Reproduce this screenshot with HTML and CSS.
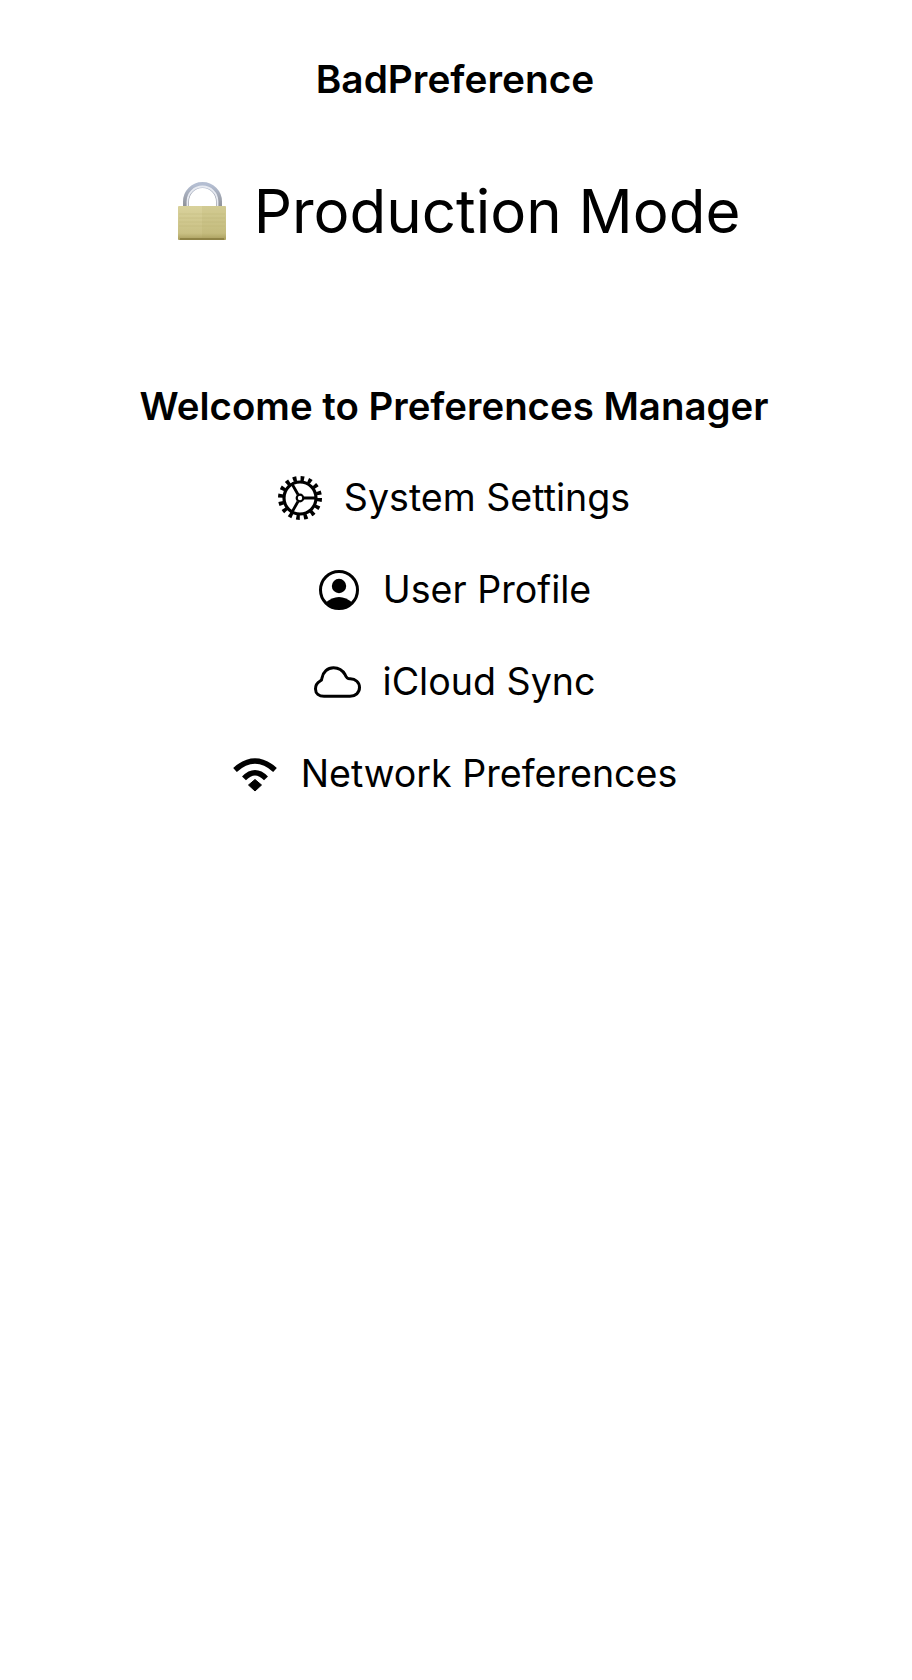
FILE: index.html
```html
<!DOCTYPE html>
<html>

<head>
  <meta charset="utf-8">
  <meta name="viewport" content="width=device-width">
  <title>BadPreference</title>
  <link rel="stylesheet" href="styles.css">
</head>

<body>
  <div class="navTitle">BadPreference</div>

  <div class="mode">
    <svg class="lockIcon" viewBox="0 0 48 58">
      <defs>
        <linearGradient id="brass" x1="0" y1="0" x2="0" y2="1">
          <stop offset="0" stop-color="#d9d29c"/>
          <stop offset="0.8" stop-color="#c9c084"/>
          <stop offset="1" stop-color="#a89c5c"/>
        </linearGradient>
        <linearGradient id="steel" x1="0" y1="0" x2="0" y2="1">
          <stop offset="0" stop-color="#b4bed2"/>
          <stop offset="1" stop-color="#8d8f94"/>
        </linearGradient>
      </defs>
      <path d="M8 26V19.500a16.500 16.500 0 0 1 33 0V26" fill="none" stroke="url(#steel)" stroke-width="6"/>
      <path d="M9.500 26V19.500a15 15 0 0 1 30 0V26" fill="none" stroke="#e8ebf2" stroke-width="1.800"/>
      <rect x="0" y="24" width="48" height="34" rx="1" fill="url(#brass)"/>
      <rect x="24" y="24" width="24" height="34" fill="#a89a50" opacity="0.12"/>
      <path d="M1 32H47M1 36H47M1 40H47M1 44H47" stroke="#b5ac6c" stroke-width="0.800" opacity="0.35"/>
      <rect x="2" y="56" width="44" height="2" fill="#8f8346"/>
    </svg>
    <span>Production Mode</span>
  </div>

  <div class="content">
    <h1>Welcome to Preferences Manager</h1>

    <div class="prefRow">
      <svg class="prefIcon" viewBox="0 0 44 44" fill="none" stroke="#000">
        <circle cx="22" cy="22" r="16" stroke-width="3.200"/>
        <circle cx="22" cy="22" r="3.300" stroke-width="2.200"/>
        <path d="M26 22H38M20 18.500 13.500 7M20 25.500 13.500 37" stroke-width="2.800"/>
        <circle cx="22" cy="22" r="19.500" stroke-width="5" stroke-dasharray="3.600 4.058"/>
      </svg>
      <span>System Settings</span>
    </div>

    <div class="prefRow">
      <svg class="prefIcon" viewBox="0 0 44 44">
        <circle cx="22" cy="22" r="18.500" fill="none" stroke="#000" stroke-width="3"/>
        <circle cx="22" cy="18" r="7.200"/>
        <path d="M8 35Q22 23 36 35A20 20 0 0 1 8 35z"/>
      </svg>
      <span>User Profile</span>
    </div>

    <div class="prefRow">
      <svg class="prefIcon" viewBox="0 0 48 44" fill="none" stroke="#000" stroke-width="3">
        <path d="M11 36.300H37c5.500 0 9.500-3.700 9.500-8.800 0-5-4-8.700-9.200-8.700-1.800 0-3.500.3-5.300-4.300C29.500 10 25 7.700 20.500 7.700 14.500 7.700 10 12 9 18c0 1 0 2-1.800 3C4.500 22.500 2.500 25.500 2.500 29c0 4.500 3.500 7.300 8.500 7.300z"/>
      </svg>
      <span>iCloud Sync</span>
    </div>

    <div class="prefRow">
      <svg class="prefIcon" viewBox="0 0 48 44" fill="none" stroke="#000" stroke-width="5.500">
        <path d="M4 18Q24 0 44 18"/>
        <path d="M13 26.300Q24 15 35 26.300"/>
        <path d="M17.500 33 24 27.500 30.500 33 24 39z" fill="#000" stroke-width="1" stroke-linejoin="round"/>
      </svg>
      <span>Network Preferences</span>
    </div>
  </div>
</body>
</html>
```

FILE: styles.css
```css
html {
  background-color: #ffffff;
  color: #000000;
}

body {
  font-family: Inter, "Liberation Sans", sans-serif;
  margin: 0;
  padding: 0;
}

.navTitle {
  margin-top: 56px;
  padding-right: 2px;
  text-align: center;
  font-size: 38.800px;
  line-height: 45px;
  font-weight: 600;
}

.mode {
  margin-top: 69px;
  padding-left: 6px;
  display: flex;
  justify-content: center;
  align-items: center;
  gap: 28px;
  font-size: 60px;
  line-height: 82px;
}

.lockIcon {
  width: 48px;
  height: 58px;
}

.content {
  margin-top: 131px;
  padding-right: 4px;
  display: flex;
  flex-direction: column;
  align-items: center;
  gap: 46px;
}

h1 {
  margin: 0;
  font-size: 38.400px;
  line-height: 46px;
  font-weight: 600;
}

.prefRow {
  display: flex;
  align-items: center;
  gap: 22px;
  font-size: 37.600px;
  line-height: 46px;
}

.prefIcon {
  height: 44px;
  width: auto;
}
```
